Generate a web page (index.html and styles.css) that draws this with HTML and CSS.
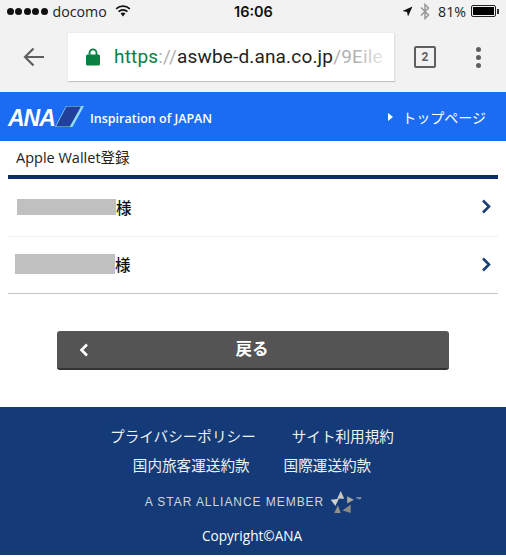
FILE: index.html
```
<!DOCTYPE html>
<html lang="ja">
<head>
<meta charset="utf-8">
<title>Apple Wallet登録</title>
<link rel="stylesheet" href="styles.css">
</head>
<body>
<div class="status">
  <div class="status-left">
    <span class="dots"><i></i><i></i><i></i><i></i><i></i></span>
    <span class="carrier">docomo</span>
    <svg class="wifi" width="16" height="12" viewBox="0 0 16 12"><path d="M8 11.500 5.600 8.600a3.600 3.600 0 0 1 4.800 0Z" fill="#111"/><path d="M3.600 6.600a6.400 6.400 0 0 1 8.800 0M1.200 3.800a10 10 0 0 1 13.600 0" fill="none" stroke="#111" stroke-width="1.700"/></svg>
  </div>
  <div class="clock">16:06</div>
  <div class="status-right">
    <svg width="11" height="11" viewBox="0 0 11 11"><path d="M10.500.5 6 10.500 5 6 .5 5Z" fill="#111"/></svg>
    <svg class="bt" width="10" height="17" viewBox="0 0 10 17"><path d="M1 4.500 8.500 12 5 15.500V1.500L8.500 5 1 12.500" fill="none" stroke="#999" stroke-width="1.500"/></svg>
    <span class="pct">81%</span>
    <span class="battery"><span class="battery-fill"></span></span><span class="battery-tip"></span>
  </div>
</div>
<div class="toolbar">
  <svg class="back" width="22" height="20" viewBox="0 0 22 20"><path d="M21 10H2.500M10.500 1.500 2 10l8.500 8.500" fill="none" stroke="#5f5f5f" stroke-width="2.200"/></svg>
  <div class="omnibox">
    <svg class="lock" width="14" height="18" viewBox="0 0 14 18"><path d="M3.500 7V4.800a3.500 3.500 0 0 1 7 0V7" fill="none" stroke="#0b8043" stroke-width="1.800"/><rect y="6.500" width="14" height="11" rx="1.500" fill="#0b8043"/></svg>
    <span class="url"><span class="scheme">https</span><span class="sep">://</span>aswbe-d.ana.co.jp<span class="path">/9Eile</span></span>
    <span class="url-fade"></span>
  </div>
  <div class="tabs">2</div>
  <div class="menu"><i></i><i></i><i></i></div>
</div>
<header class="site-header">
  <div class="brand">
    <span class="ana">ANA</span>
    <svg class="wing" width="29" height="21" viewBox="0 0 29 21"><path d="M11 0H29L17.500 21H0Z" fill="#8fdcf5"/><path d="M11.500 .6H26L14.800 20.400H1Z" fill="#21409a"/></svg>
    <span class="tagline">Inspiration of JAPAN</span>
  </div>
  <div class="top-link"><span class="tri"></span>トップページ</div>
</header>
<main class="main">
  <h1 class="page-title">Apple Wallet登録</h1>
  <ul class="names">
    <li class="name-row first"><span class="redact"></span><span class="sama">様</span><svg class="chev" width="10" height="15" viewBox="0 0 10 15"><path d="M2 1.500 8 7.500 2 13.500" fill="none" stroke="#1b3f78" stroke-width="2.600"/></svg></li>
    <li class="name-row second"><span class="redact"></span><span class="sama">様</span><svg class="chev" width="10" height="15" viewBox="0 0 10 15"><path d="M2 1.500 8 7.500 2 13.500" fill="none" stroke="#1b3f78" stroke-width="2.600"/></svg></li>
  </ul>
  <div class="actions">
    <button class="back-btn" type="button">
      <svg class="btn-chev" width="10" height="14" viewBox="0 0 10 14"><path d="M8 1.500 2.500 7 8 12.500" fill="none" stroke="#fff" stroke-width="2.600"/></svg>
      戻る
    </button>
  </div>
</main>
<footer class="footer">
  <div class="links"><span>プライバシーポリシー</span><span>サイト利用規約</span></div>
  <div class="links second-links"><span>国内旅客運送約款</span><span>国際運送約款</span></div>
  <div class="alliance">
    <span>A STAR ALLIANCE MEMBER</span>
    <svg width="25" height="24" viewBox="30 28 70 66"><path d="M60 30 70 52 50 52Z" fill="#c8c8c0"/><path d="M78 45 97 55 78 65Z" fill="#a8a8a0"/><path d="M32 55 55 52 45 72Z" fill="#d0d0c8"/><path d="M42 92 52 70 60 92Z" fill="#908f88"/><path d="M65 85 88 68 88 92Z" fill="#8a8a82"/></svg>
    <span class="tm">™</span>
  </div>
  <div class="copy">Copyright©ANA</div>
</footer>
</body>
</html>
```
FILE: styles.css
```
* { box-sizing: border-box; }
html, body { margin: 0; padding: 0; }
body { width: 506px; height: 557px; overflow: hidden; background: #fff; font-family: "Noto Sans CJK JP", "Open Sans", sans-serif; }

.status { height: 22px; background: #f2f2f2; display: flex; align-items: center; justify-content: space-between; padding: 0 7px 0 7px; position: relative; font-family: "Open Sans", sans-serif; font-size: 14.200px; color: #222; }
.status-left, .status-right { display: flex; align-items: center; }
.dots { display: flex; gap: 1.400px; margin-right: 5px; }
.dots i { width: 7px; height: 7px; border-radius: 50%; background: #111; }
.carrier { margin-right: 8px; }
.clock { position: absolute; left: 234px; font-weight: 600; color: #111; font-family: Inter, sans-serif; font-size: 14.500px; }
.status-right .bt { margin: 0 8px 0 7px; }
.pct { margin-right: 5px; }
.battery { width: 25px; height: 12px; border: 1px solid #222; border-radius: 2px; padding: 1px; display: block; }
.battery-fill { display: block; height: 100%; background: #000; width: 21px; }
.battery-tip { width: 2px; height: 5px; background: #333; margin-left: 1px; }

.toolbar { height: 70px; background: #f2f2f2; display: flex; align-items: center; padding: 0 0 0 23px; }
.back { flex: none; }
.omnibox { width: 327px; height: 49px; margin-left: 23px; background: #fff; border-bottom: 1px solid #c4c4c4; border-right: 1px solid #e0e0e0; box-shadow: 0 0 1px #ccc; display: flex; align-items: center; padding-left: 18px; position: relative; overflow: hidden; }
.lock { flex: none; }
.url { margin-left: 14px; font-family: Roboto, sans-serif; font-size: 19px; color: #222; white-space: nowrap; letter-spacing: .17px; }
.scheme { color: #0b8043; }
.sep, .path { color: #b0b0b0; }
.url-fade { position: absolute; right: 0; top: 0; bottom: 0; width: 40px; background: linear-gradient(to right, rgba(255,255,255,0), #fff); }
.tabs { width: 22px; height: 22px; margin-left: 19px; border: 2.500px solid #5f5f5f; border-radius: 2px; display: flex; align-items: center; justify-content: center; font-family: Roboto, sans-serif; font-size: 12px; font-weight: 700; color: #5f5f5f; }
.menu { margin-left: 40px; display: flex; flex-direction: column; gap: 3px; }
.menu i { width: 5px; height: 5px; border-radius: 50%; background: #5f5f5f; display: block; }

.site-header { height: 49px; background: #1b6cf2; display: flex; align-items: center; justify-content: space-between; padding: 0 20px 0 8px; color: #fff; }
.brand { display: flex; align-items: center; }
.ana { font-family: "Liberation Sans", sans-serif; font-style: italic; font-weight: 700; font-size: 23px; letter-spacing: -1px; width: 47px; line-height: 1; padding-top: 3px; }
.tagline { margin-left: 6px; padding-top: 4px; font-family: "Open Sans", sans-serif; font-weight: 600; font-size: 12.500px; }
.top-link { display: flex; align-items: center; font-size: 14px; font-weight: 400; }
.tri { width: 0; height: 0; border-left: 5px solid #fff; border-top: 4px solid transparent; border-bottom: 4px solid transparent; margin-right: 9px; }

.main { padding: 0 8px; height: 266px; }
.page-title { margin: 0; height: 38px; padding: 7px 0 0 8px; border-bottom: 4px solid #0d2d6b; font-family: "Open Sans", "Noto Sans CJK JP", sans-serif; font-size: 14.500px; font-weight: 400; line-height: 20px; color: #222; }
.names { list-style: none; margin: 0; padding: 0; }
.name-row { display: flex; align-items: center; height: 58px; padding: 0 7px 2px 0; font-size: 15.500px; font-weight: 500; color: #111; border-bottom: 1px solid #efefef; }
.name-row.second { border-bottom: 1px solid #c4c4c4; height: 57px; }
.redact { width: 99px; height: 16px; background: #c0c0c0; margin-left: 9px; }
.second .redact { width: 100px; height: 20px; margin-left: 7px; }
.chev { margin-left: auto; }
.actions { padding-top: 37px; display: flex; justify-content: center; }
.back-btn { width: 392px; height: 39px; border: 0; border-bottom: 2px solid #333; border-radius: 3px; background: #545454; color: #fff; font-family: inherit; font-size: 16.500px; font-weight: 700; position: relative; padding: 0 2px 3px 0; }
.btn-chev { position: absolute; left: 22px; top: 12px; }

.footer { height: 148px; background: #143a77; color: #eef1f6; font-size: 14.600px; font-weight: 400; text-align: center; padding-top: 18px; }
.links { display: flex; justify-content: center; gap: 36px; line-height: 22px; height: 28.500px; margin-left: -2px; }
.second-links { gap: 34px; }
.alliance { display: flex; align-items: center; justify-content: center; height: 26px; margin-top: 7px; font-family: "Liberation Sans", sans-serif; font-size: 12px; letter-spacing: .95px; color: #d2d6dc; gap: 6px; }
.tm { font-size: 6px; margin-left: -6px; margin-top: -6px; letter-spacing: 0; }
.copy { margin-top: 11px; margin-left: -2px; font-family: "Open Sans", sans-serif; font-size: 13.600px; font-weight: 400; line-height: 20px; color: #fff; }
```
